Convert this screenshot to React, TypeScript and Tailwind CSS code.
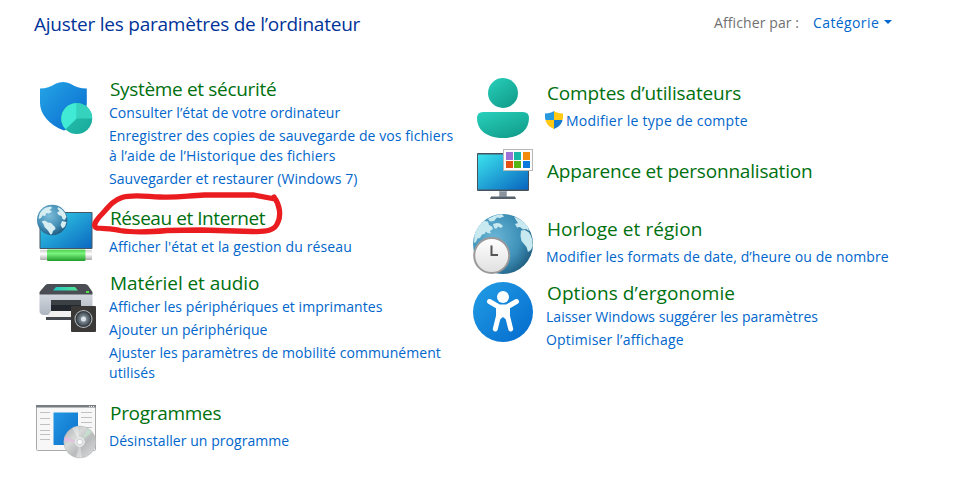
import type { ReactNode } from "react";

function SecurityIcon() {
  return (
    <svg width="62" height="62" viewBox="36 76 62 62" className="block">
      <defs>
        <linearGradient id="sec" x1="0" y1="0" x2="1" y2="1"><stop offset="0" stopColor="#25a5e6" /><stop offset="1" stopColor="#0768ce" /></linearGradient>
        <linearGradient id="pie" x1="0" y1="0" x2="1" y2="1"><stop offset="0" stopColor="#2bc7b5" /><stop offset="1" stopColor="#16a899" /></linearGradient>
      </defs>
      <path d="M40 88.500C46 88.300 51 87 55.500 83.700Q63 80.500 70.500 83.700C75 87 80 88.300 86.800 88.500V103C86.800 116 78 126 64 130.500C49 125 40 114 40 103Z" fill="url(#sec)" />
      <circle cx="76.700" cy="118.500" r="15.500" fill="url(#pie)" />
      <path d="M76.700 118.500V103A15.500 15.500 0 0 0 65.500 129.200Z" fill="#40ead5" />
      <path d="M76.700 118.500V103A15.500 15.500 0 0 1 92.200 118.500Z" fill="#35d2bd" />
    </svg>
  );
}

function NetworkIcon() {
  return (
    <svg width="62" height="62" viewBox="36 203 62 62" className="block">
      <defs>
        <linearGradient id="net" x1="0" y1="0" x2="1" y2="1"><stop offset="0" stopColor="#35d3e8" /><stop offset="1" stopColor="#0b68c0" /></linearGradient>
        <radialGradient id="ng" cx=".4" cy=".35" r=".68"><stop offset="0" stopColor="#7cbdd9" /><stop offset=".6" stopColor="#4690b7" /><stop offset="1" stopColor="#205c82" /></radialGradient>
        <linearGradient id="cable" x1="0" y1="0" x2="0" y2="1"><stop offset="0" stopColor="#4bcf51" /><stop offset=".35" stopColor="#7af37d" /><stop offset="1" stopColor="#219b2b" /></linearGradient>
        <linearGradient id="plug" x1="0" y1="0" x2="0" y2="1"><stop offset="0" stopColor="#d0d0d0" /><stop offset=".4" stopColor="#fff" /><stop offset="1" stopColor="#aaa" /></linearGradient>
      </defs>
      <rect x="39.500" y="212" width="53" height="37" rx="1" fill="#465563" />
      <rect x="40.500" y="213" width="51" height="35" fill="url(#net)" />
      <rect x="40" y="250" width="52" height="10" rx="1" fill="url(#plug)" />
      <rect x="47" y="249.500" width="38.500" height="11.500" rx="1" fill="url(#cable)" />
      <circle cx="52.200" cy="220" r="15.200" fill="url(#ng)" />
      <path d="M39.500 214Q42 209 46 207.500L51 206.500L52 208L49.500 210L52 211.500L49 213.500L46.500 213L45 216L42.500 215.500L41 218L38.500 219ZM41.500 221.500L45 220.500L48 222.500L51 223L55 227L55.500 229L53 231L52 234L50.500 234.500L48 230.500L44.500 227L43.500 224ZM58 207L62 209.500L65 213L66.500 217L64.500 220L62.500 219L61.500 216L58.500 215L57 212.500L59.500 211L57.500 209ZM62 221L66.500 222L65 226.500L62.500 228.500L60.500 225Z" fill="#d6edf2" />
    </svg>
  );
}

function HardwareIcon() {
  return (
    <svg width="62" height="62" viewBox="36 276 62 62" className="block">
      <defs>
        <linearGradient id="printer" x1="0" y1="0" x2="0" y2="1"><stop offset="0" stopColor="#d2d7df" /><stop offset="1" stopColor="#aeb5bf" /></linearGradient>
        <linearGradient id="scan"><stop stopColor="#22c5c5" /><stop offset="1" stopColor="#52e494" /></linearGradient>
        <radialGradient id="speaker"><stop offset="0" stopColor="#dce5ec" /><stop offset=".35" stopColor="#84909a" /><stop offset="1" stopColor="#3f4850" /></radialGradient>
      </defs>
      <path d="M39.500 294H92.500V311Q92.500 314 89 315H43Q39.500 314 39.500 311Z" fill="url(#printer)" />
      <path d="M45.500 285Q46.500 284 48 284H85Q87 284 88 285.500L92.500 292V294.500H39.500V292Z" fill="#4a4e54" />
      <path d="M56 287H75L78 290.500H53Z" fill="url(#scan)" />
      <rect x="86" y="291" width="3" height="2" fill="#4fe344" />
      <rect x="51" y="300" width="30" height="13" fill="#22272d" />
      <path d="M51 300H81V305H51Z" fill="#3b4045" />
      <path d="M51 311H75V318H46Z" fill="#f1f1f1" />
      <path d="M46 317H73V320H46Z" fill="#444950" />
      <rect x="71" y="306" width="25" height="26" rx="1" fill="#3a3938" />
      <circle cx="83.500" cy="319" r="9" fill="#b6bdc2" /><circle cx="83.500" cy="319" r="8" fill="#34383c" />
      <circle cx="83.500" cy="319" r="7" fill="url(#speaker)" />
      <circle cx="83.500" cy="319" r="2.500" fill="#dbe2e8" />
    </svg>
  );
}

function ProgramsIcon() {
  return (
    <svg width="62" height="62" viewBox="36 401 62 62" className="block">
      <defs>
        <linearGradient id="prog" x1="0" y1="0" x2="1" y2="1"><stop stopColor="#2397e3" /><stop offset="1" stopColor="#0b6fca" /></linearGradient>
        <linearGradient id="disc" x1="0" y1="0" x2="1" y2="1"><stop stopColor="#a8abac" /><stop offset=".35" stopColor="#d7d9d9" /><stop offset=".6" stopColor="#b8babb" /><stop offset="1" stopColor="#e0e1e1" /></linearGradient>
      </defs>
      <rect x="36.500" y="405.500" width="59" height="45" rx="1" fill="#f7f7f7" stroke="#aaa" />
      <path d="M36 405H96V407.500H36Z" fill="#777c81" />
      <path d="M89 406.500H94" stroke="#eee" strokeDasharray="1 1" />
      <path d="M40 412.500H50M40 418.500H50M40 424.500H50M40 430.500H50M40 434.500H50M40 439.500H50M81 412.500H92M81 417.500H92M81 422.500H92M81 427.500H92" stroke="#bfc1c3" />
      <rect x="53.500" y="412.500" width="24.500" height="32.500" fill="url(#prog)" />
      <circle cx="79.800" cy="442" r="16" fill="url(#disc)" stroke="#b2b4b5" strokeWidth=".5" />
      <path d="M79.800 442L64.500 437V441Z" fill="#eab9e5" opacity=".8" />
      <path d="M79.800 442L88 429L92 432Z" fill="#c5e2ce" opacity=".8" />
      <path d="M79.800 442L76 457L82 458ZM79.800 442L72 428L78 426Z" fill="#fff" opacity=".35" />
      <circle cx="79.800" cy="442" r="4.500" fill="#d9dcdc" stroke="#f0f1f1" /><circle cx="79.800" cy="442" r="2" fill="#fff" />
    </svg>
  );
}

function AccountsIcon() {
  return (
    <svg width="62" height="62" viewBox="472 77 62 62" className="block">
      <defs><linearGradient id="user" x1="0" y1="0" x2=".7" y2="1"><stop stopColor="#28d1bc" /><stop offset="1" stopColor="#129e8c" /></linearGradient></defs>
      <circle cx="503" cy="93" r="15" fill="url(#user)" />
      <path d="M483 112H523Q529 112 529 118C529 131 518 138 503 138S477 131 477 118Q477 112 483 112Z" fill="url(#user)" />
    </svg>
  );
}

function AppearanceIcon() {
  return (
    <svg width="62" height="62" viewBox="472 144 62 62" className="block">
      <defs><linearGradient id="monitor" x1="0" y1="0" x2="1" y2="1"><stop stopColor="#3be3ed" /><stop offset="1" stopColor="#0864bf" /></linearGradient></defs>
      <rect x="499" y="190" width="8" height="7" fill="#aab2b9" />
      <rect x="477" y="153" width="52" height="38" rx="1" fill="#46535e" />
      <rect x="478" y="154.500" width="50" height="35" fill="url(#monitor)" />
      <path d="M490 199L491 196.500H515L516 199Z" fill="#56606a" />
      <path d="M500 192H506V196H500Z" fill="#8b949d" />
      <rect x="503.500" y="149.500" width="29" height="21" fill="#fbfbfb" stroke="#b8b8b8" />
      <path fill="#9c70d5" d="M506 152H513V160H506Z" /><path fill="#17b6a6" d="M514 152H521V160H514Z" /><path fill="#f28b0c" d="M523 152H530V160H523Z" />
      <path fill="#e25012" d="M506 161H513V168H506Z" /><path fill="#55b516" d="M514 161H521V168H514Z" /><path fill="#0678dc" d="M523 161H530V168H523Z" />
    </svg>
  );
}

function RegionIcon() {
  return (
    <svg width="62" height="62" viewBox="472 213 62 62" className="block">
      <defs>
        <radialGradient id="globe" cx=".35" cy=".4" r=".72"><stop stopColor="#6ab6d6" /><stop offset=".6" stopColor="#3f91b9" /><stop offset="1" stopColor="#1c587b" /></radialGradient>
        <linearGradient id="clock" x1="0" y1="0" x2="0" y2="1"><stop stopColor="#fff" /><stop offset="1" stopColor="#e0e0e0" /></linearGradient>
      </defs>
      <circle cx="503" cy="244" r="30" fill="url(#globe)" />
      <path d="M474.500 235Q477 226 484 221L488 221.500L489 225L492 226.500L493 229L490 231L491 233.500L487.500 233L486 231.500L484.500 234L482 234.500L480 238L477.500 238.500L476 242L474 243ZM488 219Q494 215 502 214.200L504 216.500L500 218L497 217.500L494 221L490 221.500ZM493 224L497 223L500 223.500L503 226L501 228L498 226.500L496 229L494 227.500ZM514 216.500Q523 220 528 227L529 231L526 229L523 229.500L520 227L517 227.500L515 224L518 223L516 220ZM521 230.500L525 230L529 232.500Q533 238 532.700 246L531 250L528 252L526.500 247L524 244L521.500 241L520.500 236Z" fill="#c8e9ef" />
      <circle cx="491.700" cy="255.500" r="17.500" fill="url(#clock)" stroke="#9b999a" strokeWidth="2" />
      <path d="M491.500 245.500V255H498" fill="none" stroke="#555" strokeWidth="2" />
    </svg>
  );
}

function AccessibilityIcon() {
  return (
    <svg width="62" height="62" viewBox="472 281 62 62" className="block">
      <defs><linearGradient id="access" x1="0" y1="0" x2="1" y2="1"><stop stopColor="#239ee5" /><stop offset="1" stopColor="#036acd" /></linearGradient></defs>
      <circle cx="503" cy="312" r="30" fill="url(#access)" />
      <circle cx="503" cy="297" r="6" fill="#fff" />
      <path d="M489.500 301.500L499 307H507L516.500 301.500M498.500 307V316L495.300 329M507.500 307V316L510.700 329" fill="none" stroke="#fff" strokeWidth="5" strokeLinecap="round" strokeLinejoin="round" />
      <path d="M497 305H509V316L508 321L503 317L498 321L497 316Z" fill="#fff" />
    </svg>
  );
}

function AdminShield() {
  return (
    <svg width="20" height="20" viewBox="545 111 20 20" className="block shrink-0">
      <defs><clipPath id="admin"><path d="M545 113.500Q551 113 554 111Q557 113 563 113.500V118Q562 126 554 129Q546 126 545 118Z" /></clipPath></defs>
      <g clipPath="url(#admin)"><path fill="#2699df" d="M545 111H554V120H545Z" /><path fill="#ffc914" d="M554 111H563V120H554ZM545 120H554V129H545Z" /><path fill="#177bd0" d="M554 120H563V129H554Z" /></g>
    </svg>
  );
}

function Category({ icon, iconTop = "", title, titleTrack, className = "", children }: {
  icon: ReactNode; iconTop?: string; title: string; titleTrack: string; className?: string; children?: ReactNode;
}) {
  return (
    <section className={`flex items-start ${className}`}>
      <div className={`h-0 w-[62px] shrink-0 ${iconTop}`}>{icon}</div>
      <div className="ml-3 whitespace-nowrap">
        <h2 className={`h-[26px] text-[19px] leading-6 text-[#00700f] ${titleTrack}`}>{title}</h2>
        {children}
      </div>
    </section>
  );
}

function Link({ children, className = "" }: { children: ReactNode; className?: string }) {
  return <a className={`-ml-px block text-[14px] leading-5 text-[#0066cc] ${className}`}>{children}</a>;
}

export default function App() {
  return (
    <main className="h-[482px] w-[955px] overflow-hidden bg-white font-['Open_Sans','Noto_Sans',sans-serif]">
      <header className="flex h-[77px] items-start whitespace-nowrap pl-[34px] pt-[10px]">
        <h1 className="w-[680px] text-[19px] leading-7 tracking-[-0.235px] text-[#003399]">Ajuster les paramètres de l’ordinateur</h1>
        <span className="mt-[3px] w-[99px] text-[14px] leading-5 tracking-[0.1px] text-[#707070]">Afficher par :</span>
        <span className="mt-[3px] w-[71px] text-[14px] leading-5 tracking-[0.4px] text-[#0066cc]">Catégorie</span>
        <svg width="8" height="5" viewBox="0 0 8 5" className="mt-[10px]"><path d="M0 0H8L4 4Z" fill="#0066cc" /></svg>
      </header>
      <div className="flex">
        <div className="w-[436px] shrink-0 pl-9">
          <Category icon={<SecurityIcon />} iconTop="-mt-px" title="Système et sécurité" titleTrack="tracking-[-0.33px]" className="h-[129px]">
            <Link className="tracking-[0.05px]">Consulter l’état de votre ordinateur</Link>
            <Link className="mt-[3px] tracking-[0.08px]">Enregistrer des copies de sauvegarde de vos fichiers<br /><span className="tracking-[0.16px]">à l’aide de l’Historique des fichiers</span></Link>
            <Link className="mt-[3px] tracking-[0.06px]">Sauvegarder et restaurer (Windows 7)</Link>
          </Category>
          <div className="relative">
            <Category icon={<NetworkIcon />} iconTop="-mt-[3px]" title="Réseau et Internet" titleTrack="tracking-[-0.44px]" className="h-[65px]">
              <Link className="mt-[5px] tracking-[0.12px]">Afficher l'état et la gestion du réseau</Link>
            </Category>
            <svg width="196" height="48" viewBox="90 190 196 48" className="pointer-events-none absolute -top-4 left-[54px]">
              <path d="M97 228C91 226 98 218 103 213C110 205 114 200 122 197.500C132 194 146 196.500 160 197C178 198 188 195.500 204 195L254 195L275 199L274 197C280 205 281 215 278 222C275 231 266 232 252 231.500L201 230L167 230.500C146 232.500 132 232.500 120 230.500C112 228 104 229 97 228" fill="none" stroke="#ea1c1f" strokeWidth="5.300" strokeLinecap="round" strokeLinejoin="round" />
            </svg>
          </div>
          <Category icon={<HardwareIcon />} iconTop="mt-[5px]" title="Matériel et audio" titleTrack="tracking-[-0.06px]" className="h-[130px]">
            <Link className="tracking-[0.06px]">Afficher les périphériques et imprimantes</Link>
            <Link className="mt-[3px] tracking-[0.05px]">Ajouter un périphérique</Link>
            <Link className="mt-[3px] tracking-[0.07px]">Ajuster les paramètres de mobilité communément<br />utilisés</Link>
          </Category>
          <Category icon={<ProgramsIcon />} title="Programmes" titleTrack="tracking-[-0.3px]">
            <Link className="mt-1 tracking-[0.05px]">Désinstaller un programme</Link>
          </Category>
        </div>
        <div className="flex-1 pl-9 pt-1 [&_h2]:pl-px">
          <Category icon={<AccountsIcon />} iconTop="-mt-1" title="Comptes d’utilisateurs" titleTrack="tracking-[-0.14px]" className="h-[78px]">
            <div className="-ml-px mt-1 flex"><AdminShield /><Link className="ml-[1px] tracking-[0.25px]">Modifier le type de compte</Link></div>
          </Category>
          <Category icon={<AppearanceIcon />} iconTop="-mt-[15px]" title="Apparence et personnalisation" titleTrack="tracking-[-0.2px]" className="h-[58px]" />
          <Category icon={<RegionIcon />} iconTop="-mt-1" title="Horloge et région" titleTrack="tracking-[0.06px]" className="h-16">
            <Link className="mt-1 pl-px tracking-[0.1px]">Modifier les formats de date, d’heure ou de nombre</Link>
          </Category>
          <Category icon={<AccessibilityIcon />} title="Options d’ergonomie" titleTrack="tracking-[0.1px]">
            <Link className="pl-px tracking-[0.02px]">Laisser Windows suggérer les paramètres</Link>
            <Link className="mt-[3px] pl-px tracking-[0.2px]">Optimiser l’affichage</Link>
          </Category>
        </div>
      </div>
    </main>
  );
}
